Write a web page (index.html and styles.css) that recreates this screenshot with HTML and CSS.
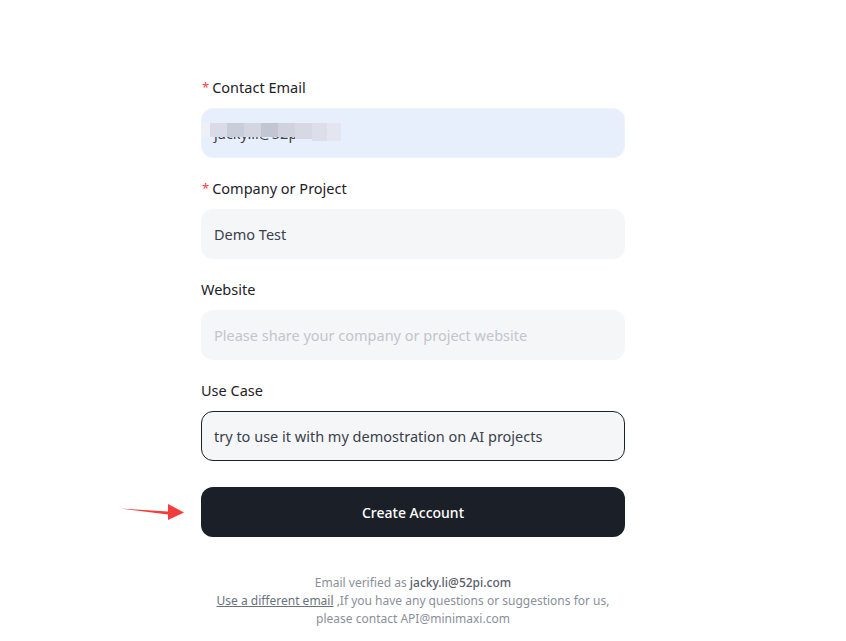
FILE: index.html
```html
<!DOCTYPE html>
<html>
<head>
<meta charset="utf-8">
<link rel="stylesheet" href="styles.css">
</head>
<body>
<div class="page">
  <form class="form">
    <div class="field">
      <label class="label"><span class="req">*</span>Contact Email</label>
      <div class="input email">
        <span class="val">jacky.li@52pi.com</span>
        <div class="mosaic">
          <i class="m1"></i><i class="m2"></i><i class="m3"></i><i class="m4"></i><i class="m5"></i><i class="m6"></i><i class="m7"></i><i class="m8"></i><i class="m9"></i>
        </div>
      </div>
    </div>
    <div class="field">
      <label class="label"><span class="req">*</span>Company or Project</label>
      <div class="input"><span class="val">Demo Test</span></div>
    </div>
    <div class="field">
      <label class="label">Website</label>
      <div class="input"><span class="ph">Please share your company or project website</span></div>
    </div>
    <div class="field last">
      <label class="label">Use Case</label>
      <div class="input focus"><span class="val">try to use it with my demostration on AI projects</span></div>
    </div>
    <div class="btn-row">
      <svg class="arrow" width="70" height="20" viewBox="0 0 70 20">
        <path d="M0 4.5 L48 7.5 L48 0 L64 8.5 L48 16 L48 10.5 Z" fill="#f23d3d"/>
      </svg>
      <button type="button" class="btn">Create Account</button>
    </div>
    <div class="foot">
      <p>Email verified as <b>jacky.li@52pi.com</b></p>
      <p><u>Use a different email</u> ,If you have any questions or suggestions for us,</p>
      <p>please contact API@minimaxi.com</p>
    </div>
  </form>
</div>
</body>
</html>
```
FILE: styles.css
```css
* { box-sizing: border-box; }
html, body { margin: 0; padding: 0; background: #fff; }
body { font-family: "Noto Sans", "Open Sans", sans-serif; color: #1d2129; }
.page { display: flex; justify-content: center; padding-top: 77px; padding-right: 20px; }
.form { width: 424px; display: flex; flex-direction: column; }
.field { display: flex; flex-direction: column; margin-bottom: 20px; }
.field.last { margin-bottom: 26px; }
.label { font-size: 14.5px; line-height: 20px; height: 20px; margin-bottom: 11px; color: #1d2129; display: flex; align-items: center; }
.req { color: #f53f3f; font-size: 13px; margin-right: 3px; margin-left: 1px; }
.input { position: relative; height: 50px; border-radius: 12px; background: #f5f6f8; display: flex; align-items: center; padding: 0 12px; font-size: 14.5px; border: 1px solid transparent; }
.input.email { background: #e8effc; border-color: #eef2fb; }
.input.focus { border-color: #1d2129; }
.val { color: #3a3f4b; }
.ph { color: #c2c5cc; }
.mosaic { position: absolute; left: 0; top: 14px; display: flex; align-items: flex-start; }
.mosaic i { display: block; height: 14px; }
.m1 { width: 8px; background: #eef0f6; }
.m2 { width: 17px; background: #d9dce7; }
.m3 { width: 17px; background: #c9ccd9; }
.m4 { width: 17px; background: #d3d6e1; }
.m5 { width: 17px; background: #c2c6d3; }
.m6 { width: 17px; background: #d0d3de; }
.m7 { width: 17px; background: #d6d9e4; height: 16px !important; }
.m8 { width: 15px; background: #dcdfe9; height: 18px !important; }
.m9 { width: 14px; background: #e3e6ef; height: 18px !important; }
.btn-row { position: relative; }
.arrow { position: absolute; left: -81px; top: 17px; }
.btn { width: 100%; height: 50px; border: 0; border-radius: 12px; background: #1b1f27; color: #fff; font-family: inherit; font-size: 14px; font-weight: 500; }
.foot { margin-top: 37px; text-align: center; font-size: 12px; line-height: 18px; color: #8a8f99; }
.foot p { margin: 0; }
.foot b { color: #5a606b; font-weight: 500; }
.foot u { color: #6b717c; }
```
